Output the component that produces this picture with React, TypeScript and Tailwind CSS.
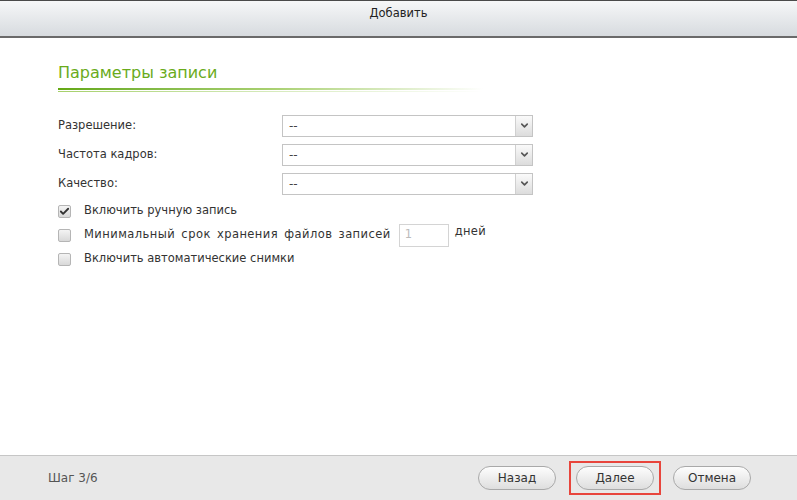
import { ChevronDown, Check } from "lucide-react";

const font = { fontFamily: '"DejaVu Sans", Verdana, sans-serif' };

function Select({ label }: { label: string }) {
  return (
    <div className="flex h-[29px] items-center">
      <span className="w-[224px] text-[11.5px] text-[#333]">{label}</span>
      <div className="flex h-[22px] w-[251px] items-center border border-[#c4c4c4] bg-white">
        <span className="flex-1 pl-[6px] text-[12px] text-[#444]">--</span>
        <div className="flex h-full w-[17px] items-center justify-center border-l border-[#d0d0d0] bg-gradient-to-b from-[#fafafa] to-[#dcdcdc]">
          <ChevronDown size={11} strokeWidth={3.5} className="text-[#555]" />
        </div>
      </div>
    </div>
  );
}

function Box({ checked }: { checked?: boolean }) {
  return (
    <span className="flex h-[13px] w-[13px] shrink-0 items-center justify-center rounded-[2px] border border-[#b5b5b5] bg-gradient-to-b from-[#f4f4f4] to-[#d8d8d8]">
      {checked && <Check size={11} strokeWidth={4} className="text-[#333]" />}
    </span>
  );
}

function Pill({ children }: { children: string }) {
  return (
    <button className="flex h-[24px] w-[78px] items-center justify-center rounded-full border border-[#a9a9a9] bg-gradient-to-b from-[#fdfdfd] to-[#dedede] text-[12px] text-[#333]">
      {children}
    </button>
  );
}

export default function App() {
  return (
    <div className="flex h-[500px] w-[797px] flex-col bg-white" style={font}>
      <header className="flex h-[38px] items-center justify-center border-t border-b-2 border-t-[#4a4a4a] border-b-[#6a6a6a] bg-gradient-to-b from-[#f6f7f8] to-[#d7dbdf] pb-[10px]">
        <span className="text-[11.5px] text-[#222]">Добавить</span>
      </header>

      <main className="flex-1 pl-[58px] pt-[26px]">
        <h2 className="text-[16px] leading-[18px] text-[#6aab1c]">Параметры записи</h2>
        <div className="mt-[6px] w-[425px]">
          <div className="h-[2px] bg-gradient-to-r from-[#64a812] via-[#a8d070] to-transparent" />
          <div className="mt-[1px] h-[1px] bg-gradient-to-r from-[#a6d06a] via-[#d6eabb] to-transparent" />
        </div>

        <div className="mt-[19px] flex flex-col">
          <Select label="Разрешение:" />
          <Select label="Частота кадров:" />
          <Select label="Качество:" />
        </div>

        <div className="mt-[1px] flex flex-col text-[11.5px] text-[#333]">
          <label className="flex h-[24px] items-center gap-[13px]">
            <Box checked />
            Включить ручную запись
          </label>
          <label className="flex h-[24px] items-center gap-[13px]">
            <Box />
            <span className="tracking-[0.45px] [word-spacing:2px]">Минимальный срок хранения файлов записей</span>
            <span className="-ml-[5px] flex items-center gap-[6px]">
              <span className="flex h-[23px] w-[50px] items-center border border-[#d4d4d4] pl-[5px] text-[#bbb]">1</span>
              <span className="-mt-[6px] tracking-[0.3px]">дней</span>
            </span>
          </label>
          <label className="flex h-[24px] items-center gap-[13px]">
            <Box />
            Включить автоматические снимки
          </label>
        </div>
      </main>

      <footer className="flex h-[45px] items-center border-t border-[#c6c6c6] bg-[#e8e8e8] pl-[48px] pr-[46px]">
        <span className="flex-1 text-[12px] text-[#555]">Шаг 3/6</span>
        <div className="flex items-center">
          <Pill>Назад</Pill>
          <div className="ml-[13px] flex h-[34px] w-[92px] items-center justify-center border-2 border-[#e8453c]">
            <Pill>Далее</Pill>
          </div>
          <div className="ml-[12px]">
            <Pill>Отмена</Pill>
          </div>
        </div>
      </footer>
    </div>
  );
}
